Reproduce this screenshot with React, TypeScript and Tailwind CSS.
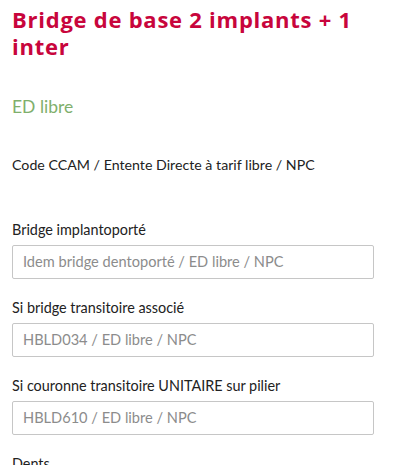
export default function App() {
  const body = { fontFamily: '"Lato", "Open Sans", sans-serif' };
  const fields = [
    { label: "Bridge implantoporté", ph: "Idem bridge dentoporté / ED libre / NPC" },
    { label: "Si bridge transitoire associé", ph: "HBLD034 / ED libre / NPC" },
    { label: "Si couronne transitoire UNITAIRE sur pilier", ph: "HBLD610 / ED libre / NPC" },
  ];
  return (
    <div className="w-[400px] h-[465px] overflow-hidden bg-white pl-3" style={body}>
      <h1
        className="w-[360px] text-[22px] leading-[27px] font-bold text-[#c8053c] pt-[6px] tracking-[0.75px]"
        style={{ fontFamily: '"Open Sans", sans-serif' }}
      >
        Bridge de base 2 implants + 1 inter
      </h1>
      <div className="mt-[36px] text-[17.5px] leading-[22px] text-[#7faf6c]">ED libre</div>
      <div className="mt-[38px] text-[14.2px] leading-[18px] text-[#222]">
        Code CCAM / Entente Directe à tarif libre / NPC
      </div>
      <div className="mt-[47px] flex flex-col gap-[20px]">
        {fields.map((f) => (
          <div key={f.label} className="flex flex-col">
            <div className="text-[14.4px] leading-[18px] text-[#222] mb-[6px]">{f.label}</div>
            <div className="w-[362px] h-[34px] border border-[#c6c6c6] rounded-[2px] flex items-center pl-[10px] text-[14.6px] text-[#8c8c8c]">
              {f.ph}
            </div>
          </div>
        ))}
        <div className="text-[14.4px] leading-[18px] text-[#222]">Dents</div>
      </div>
    </div>
  );
}
